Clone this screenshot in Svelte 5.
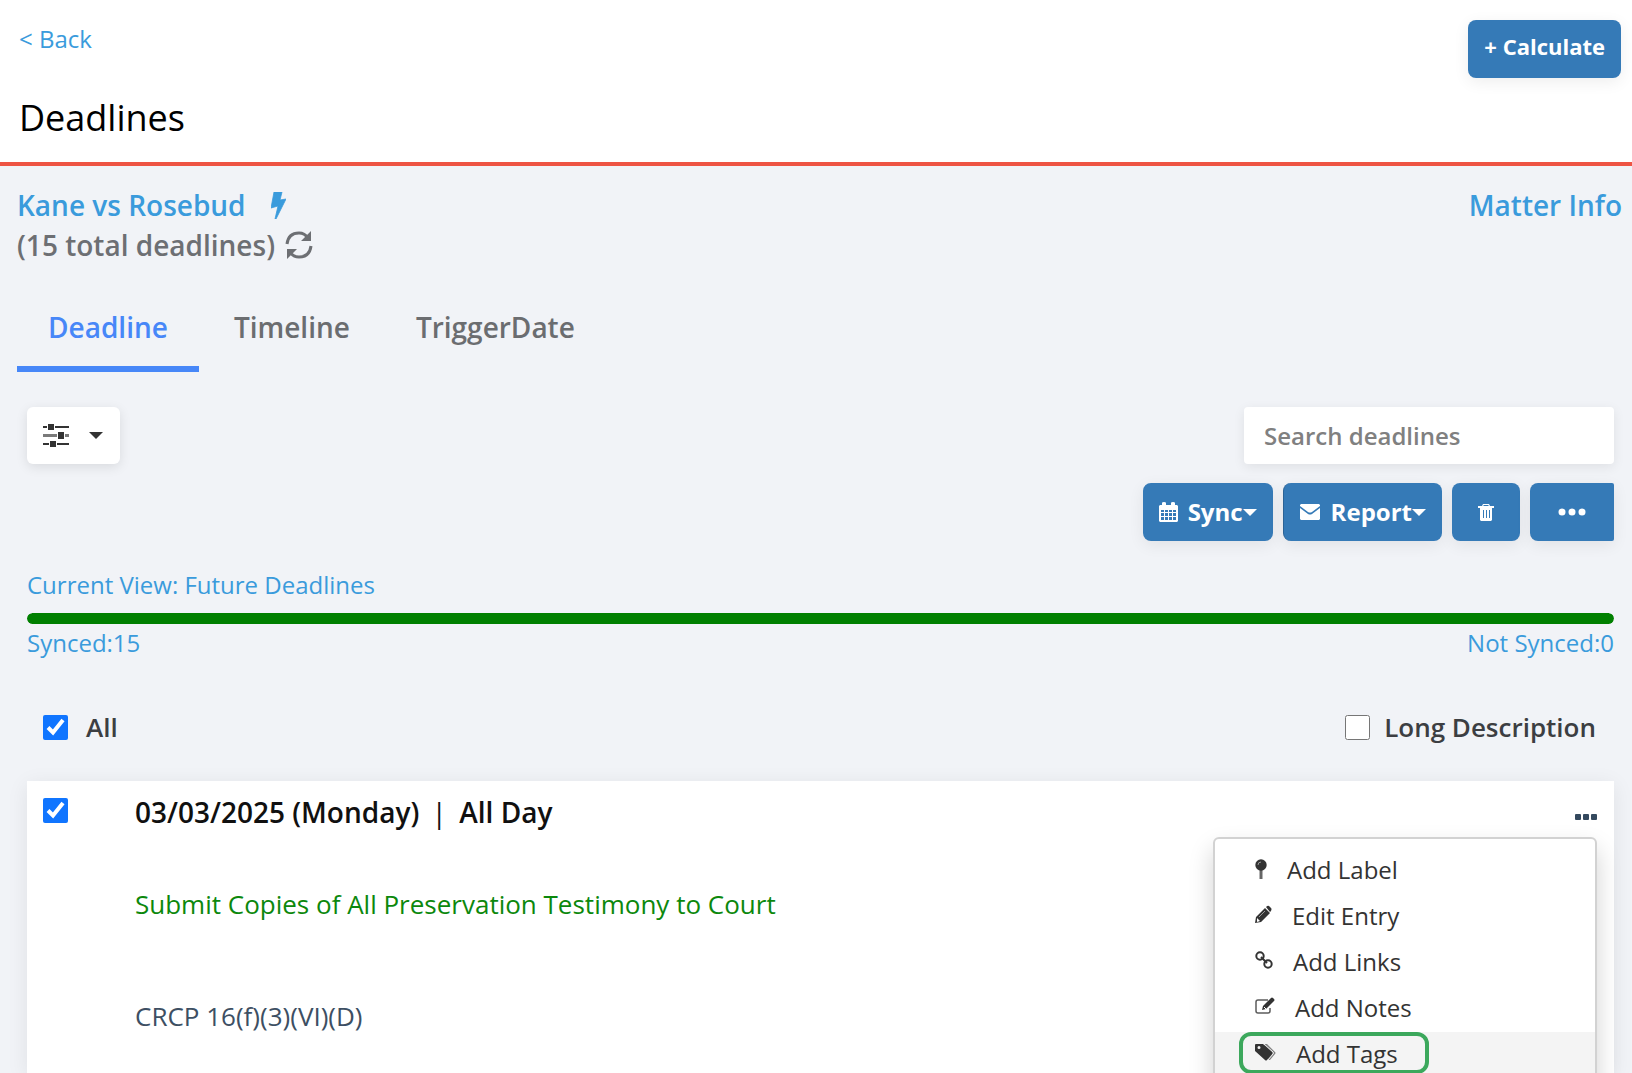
<script lang="ts">
  let allSelected = $state(true);
  let longDescription = $state(false);
  let entrySelected = $state(true);
  let search = $state("");
  let activeTab = $state("Deadline");

  const tabs = ["Deadline", "Timeline", "TriggerDate"];
  const synced = 15;
  const notSynced = 0;
  const syncedPercent = (synced / (synced + notSynced)) * 100;

  const actions = [
    { icon: "pin", label: "Add Label", width: 12 },
    { icon: "pencil", label: "Edit Entry", width: 17 },
    { icon: "link", label: "Add Links", width: 18 },
    { icon: "note", label: "Add Notes", width: 20 },
    { icon: "tags", label: "Add Tags", width: 21 },
  ];
</script>

{#snippet caret()}
  <svg class="caret" viewBox="0 0 14 7" aria-hidden="true"><path d="M0 0h14L7 7z" /></svg>
{/snippet}

<div class="page">
  <header class="header">
    <div>
      <a class="back" href="#back">&lt; Back</a>
      <h1>Deadlines</h1>
    </div>
    <button class="btn calculate">+ Calculate</button>
  </header>

  <main>
    <section class="matter">
      <div>
        <a class="matter-link" href="#matter">
          Kane vs Rosebud
          <svg class="bolt" viewBox="0 0 15 27" aria-hidden="true">
            <path d="M3 0h8L9 8l6-1L5 27H4l3-13-7 2z" stroke="currentColor" stroke-width="0.8" />
          </svg>
        </a>
        <div class="total">
          (15 total deadlines)
          <button class="refresh" aria-label="Refresh">
            <svg viewBox="0 0 28 28" aria-hidden="true">
              <path d="M2 13C3 5 8 2 14 2c4 0 7 2 9 5M26 15c-1 8-6 11-12 11-4 0-7-2-9-5" fill="none" stroke="currentColor" stroke-width="3" />
              <path d="M26 0v10H16zM2 28V18h10z" />
            </svg>
          </button>
        </div>
      </div>
      <a class="matter-link" href="#info">Matter Info</a>
    </section>

    <nav class="tabs">
      {#each tabs as tab}
        <button class="tab" class:active={activeTab === tab} onclick={() => (activeTab = tab)}>{tab}</button>
      {/each}
    </nav>

    <div class="content">
      <div class="toolbar">
        <button class="filter" aria-label="Filter deadlines">
          <svg class="sliders" viewBox="0 0 26 25" aria-hidden="true">
            <path d="M0 3h4v2H0zM12 3h14v2H12zM0 20h6v2H0zM14 20h12v2H14z" />
            <path d="M0 11h14v3H0zM22 11h4v3h-4z" opacity="0.65" />
            <path d="M5 1h6v6H5zM15 9h6v7h-6zM7 18h6v6H7z" />
          </svg>
          {@render caret()}
        </button>
        <input class="search" type="search" placeholder="Search deadlines" aria-label="Search deadlines" bind:value={search} />
      </div>

      <div class="buttons">
        <button class="btn sync">
          <svg class="calendar" viewBox="0 0 19 20" aria-hidden="true">
            <path fill-rule="evenodd" d="M1 3h2V1q0-1 2-1t2 1v2h5V1q0-1 2-1t2 1v2h2l1 1v15l-1 1H1l-1-1V4zM2 8v2h3V8zM6 8v2h3V8zM10 8v2h3V8zM14 8v2h3V8zM2 11v3h3v-3zM6 11v3h3v-3zM10 11v3h3v-3zM14 11v3h3v-3zM2 15v3h3v-3zM6 15v3h3v-3zM10 15v3h3v-3zM14 15v3h3v-3z" />
          </svg>
          <span>Sync</span>{@render caret()}
        </button>
        <button class="btn report">
          <svg class="envelope" viewBox="0 0 20 16" aria-hidden="true">
            <path d="M0 4l8 6q2 1 4 0l8-6v11l-1 1H1l-1-1zM1 0h18l1 1v1l-8 6q-2 1-4 0L0 2V1z" />
          </svg>
          <span>Report</span>{@render caret()}
        </button>
        <button class="btn trash" aria-label="Delete">
          <svg viewBox="0 0 16 17" aria-hidden="true">
            <path fill-rule="evenodd" d="M0 2h4l1-2h6l1 2h4v2h-2v12l-1 1H3l-1-1V4H0zM6 1L5 2h6l-1-1zM5 6v8h1V6zM8 6v8h1V6zM11 6v8h1V6z" />
          </svg>
        </button>
        <button class="btn more" aria-label="More actions">
          <svg viewBox="0 0 28 8" aria-hidden="true"><circle cx="4" cy="4" r="3.5" /><circle cx="14" cy="4" r="3.5" /><circle cx="24" cy="4" r="3.5" /></svg>
        </button>
      </div>

      <a class="view" href="#view">Current View: Future Deadlines</a>
      <div class="progress" role="progressbar" aria-label="Synced deadlines" aria-valuenow={syncedPercent}>
        <div class="progress-bar" style={`width: ${syncedPercent}%`}></div>
      </div>
      <div class="counts">
        <a href="#synced">Synced:{synced}</a>
        <a href="#not-synced">Not Synced:{notSynced}</a>
      </div>

      <div class="options">
        <label class="all"><input type="checkbox" bind:checked={allSelected} />All</label>
        <label><input type="checkbox" bind:checked={longDescription} />Long Description</label>
      </div>

      <article class="card">
        <input type="checkbox" aria-label="Select deadline" bind:checked={entrySelected} />
        <div class="entry">
          <h2>03/03/2025 (Monday) <span class="divider">|</span> All Day</h2>
          <p class="description">Submit Copies of All Preservation Testimony to Court</p>
          <p class="rule">CRCP 16(f)(3)(VI)(D)</p>
        </div>
        <div class="entry-menu">
          <button class="dots" aria-label="Entry actions">
            <svg viewBox="0 0 22 6" aria-hidden="true"><rect width="6" height="6" rx="1" /><rect x="8" width="6" height="6" rx="1" /><rect x="16" width="6" height="6" rx="1" /></svg>
          </button>
          <div class="menu">
            {#each actions as action}
              <button class="item" class:highlight={action.icon === "tags"}>
                <svg class="icon" viewBox={`0 0 ${action.width} 20`} style={`width: ${action.width}px`} aria-hidden="true">
                  {#if action.icon === "pin"}
                    <path d="M4.5 10h3v10h-3z" opacity="0.75" />
                    <circle cx="6" cy="6" r="5.7" />
                    <path d="M3 6q0-3 3-3" fill="none" stroke="#999999" />
                  {:else if action.icon === "pencil"}
                    <path d="M0 18l1-6L10 3l5 5-9 9zM11 2q2-2 3-1l2 2q1 1 0 3l-1 1z" />
                    <path d="M2 13l3 3-3 1z" fill="#ffffff" />
                    <path d="M4 12l6-6" fill="none" stroke="#999999" />
                  {:else if action.icon === "link"}
                    <g fill="none" stroke="currentColor" stroke-width="2">
                      <circle cx="5" cy="5" r="3.7" />
                      <circle cx="13" cy="13" r="3.7" />
                      <path d="M6 6l6 6" />
                    </g>
                  {:else if action.icon === "note"}
                    <path d="M13 3H3Q1 3 1 5v9q0 2 2 2h10q2 0 2-2v-3" fill="none" stroke="currentColor" stroke-width="1.5" opacity="0.8" />
                    <path d="M7 13l1-4 8-8q1-1 2 0l1 1q1 1 0 2l-8 8z" />
                    <path d="M9 10l2 2" stroke="#ffffff" />
                  {:else}
                    <path d="M9 1h3l8 8q1 1 0 2l-5 6h-2z" opacity="0.6" />
                    <path fill-rule="evenodd" d="M0 2q0-1 1-1h7l9 8q1 1 0 2l-5 6q-1 1-2 0L0 8zM4 3a1.5 1.5 0 1 0 0 3 1.5 1.5 0 0 0 0-3z" />
                    <path d="M9 1l9 8q1 1 0 2l-5 6" fill="none" stroke="#f4f4f4" />
                  {/if}
                </svg>
                {action.label}
              </button>
            {/each}
          </div>
        </div>
      </article>
    </div>
  </main>
</div>

<style>
  :global(body) {
    margin: 0;
  }

  .page {
    display: flex;
    flex-direction: column;
    height: 100vh;
    overflow: hidden;
    background: #f1f3f7;
    color: #3c3e42;
    font-family: "Open Sans", "Noto Sans", sans-serif;
    font-size: 24px;
    line-height: 32px;
  }

  .page * {
    box-sizing: border-box;
  }

  button,
  input {
    margin: 0;
    padding: 0;
    border: 0;
    background: none;
    color: inherit;
    font: inherit;
  }

  a {
    color: #3a9bdc;
    text-decoration: none;
  }

  svg {
    display: block;
    flex: none;
    fill: currentColor;
  }

  .header {
    display: flex;
    justify-content: space-between;
    align-items: flex-start;
    padding: 20px 11px 18px 19px;
    border-bottom: 4px solid #ee5443;
    background: #ffffff;
  }

  .back {
    display: block;
    padding-top: 3px;
  }

  h1 {
    margin: 37px 0 0;
    color: #000000;
    font-size: 36px;
    font-weight: 400;
    line-height: 52px;
  }

  .btn {
    display: flex;
    align-items: center;
    justify-content: center;
    height: 58px;
    border-radius: 8px;
    background: #357ab7;
    box-shadow: 0 4px 16px rgba(0, 0, 0, 0.07);
    color: #ffffff;
    font-weight: 700;
  }

  .calculate {
    padding: 0 16px 6px;
    font-size: 22px;
  }

  main {
    display: flex;
    flex: 1;
    flex-direction: column;
    padding: 19px 0 0 17px;
  }

  .matter {
    display: flex;
    justify-content: space-between;
    padding-right: 10px;
    font-size: 28px;
    font-weight: 600;
    line-height: 40px;
  }

  .matter-link,
  .total {
    display: flex;
    align-items: center;
    align-self: flex-start;
  }

  .total {
    gap: 10px;
    color: #6d6f73;
  }

  .bolt {
    width: 15px;
    height: 27px;
    margin-left: 25px;
  }

  .refresh svg {
    width: 28px;
    height: 28px;
  }

  .tabs {
    display: flex;
    gap: 4px;
    margin-top: 26px;
  }

  .tab {
    height: 81px;
    padding: 0 31px 3px;
    border-bottom: 6px solid transparent;
    color: #6b6d70;
    font-size: 28px;
    font-weight: 600;
  }

  .tab.active {
    border-color: #4787f8;
    color: #4787f8;
  }

  .content {
    display: flex;
    flex: 1;
    flex-direction: column;
    padding: 35px 18px 0 10px;
  }

  .toolbar,
  .counts,
  .options {
    display: flex;
    justify-content: space-between;
  }

  .filter {
    display: flex;
    align-items: center;
    gap: 20px;
    height: 57px;
    padding: 0 17px 0 16px;
    border-radius: 6px;
    background: #ffffff;
    box-shadow: 0 3px 12px rgba(0, 0, 0, 0.1);
    color: #333333;
  }

  .sliders {
    width: 26px;
    height: 25px;
  }

  .caret {
    width: 14px;
    height: 7px;
  }

  .search {
    width: 370px;
    height: 57px;
    padding: 0 20px;
    border-radius: 4px;
    background: #ffffff;
    box-shadow: 0 3px 12px rgba(0, 0, 0, 0.08);
    font-weight: 600;
  }

  .search::placeholder {
    color: #808080;
    opacity: 1;
  }

  .buttons {
    display: flex;
    justify-content: flex-end;
    gap: 10px;
    margin-top: 19px;
  }

  .sync,
  .report {
    padding: 0 16px;
  }

  .report {
    border-left: 1px solid #2b6396;
  }

  .calendar {
    width: 19px;
    height: 20px;
    margin-right: 10px;
  }

  .envelope {
    width: 20px;
    height: 16px;
    margin-right: 11px;
  }

  .trash {
    width: 68px;
  }

  .trash svg {
    width: 16px;
    height: 17px;
  }

  .more {
    width: 84px;
    border-radius: 8px 2px 2px 8px;
  }

  .more svg {
    width: 28px;
    height: 8px;
  }

  .view {
    align-self: flex-start;
    margin-top: 28px;
  }

  .progress {
    height: 11px;
    margin-top: 12px;
    overflow: hidden;
    border-radius: 6px;
    background: #dddddd;
  }

  .progress-bar {
    height: 100%;
    border-radius: 6px;
    background: #008000;
  }

  .counts {
    margin-top: 3px;
  }

  .options {
    margin-top: 52px;
    padding: 0 18px 0 16px;
    font-size: 26px;
    font-weight: 600;
  }

  label {
    display: flex;
    align-items: center;
    gap: 14px;
  }

  .all {
    gap: 18px;
  }

  input[type="checkbox"] {
    width: 25px;
    height: 25px;
    accent-color: #1075ff;
  }

  .card {
    display: flex;
    flex: 1;
    align-items: flex-start;
    margin-top: 38px;
    padding: 15px 17px 0 16px;
    background: #ffffff;
    box-shadow: 0 4px 20px rgba(0, 0, 0, 0.08);
  }

  .card > input {
    margin-top: 2px;
  }

  .entry {
    flex: 1;
    padding-left: 67px;
    color: #3d4f63;
    font-size: 26px;
  }

  h2 {
    margin: 0;
    color: #101010;
    font-size: 28px;
    font-weight: 600;
  }

  .divider {
    padding: 0 5px;
    font-weight: 400;
  }

  .description,
  .rule {
    margin: 60px 0 0;
  }

  .description {
    color: #0c880c;
  }

  .rule {
    margin-top: 80px;
  }

  .entry-menu {
    position: relative;
    padding-top: 18px;
    color: #34495e;
  }

  .dots {
    display: block;
  }

  .dots svg {
    width: 22px;
    height: 6px;
  }

  .menu {
    position: absolute;
    top: 41px;
    right: 0;
    width: 384px;
    padding: 9px 0;
    border: 2px solid #d2d2d2;
    border-radius: 6px;
    background: #ffffff;
    box-shadow: 0 12px 24px rgba(0, 0, 0, 0.18);
    color: #333333;
  }

  .item {
    position: relative;
    display: flex;
    gap: 20px;
    align-items: center;
    width: 100%;
    height: 46px;
    padding: 0 0 2px 40px;
    font-size: 24px;
  }

  .icon {
    height: 20px;
    margin-bottom: 2px;
  }

  .highlight {
    background: #f4f4f4;
  }

  .highlight::after {
    position: absolute;
    top: 0;
    left: 24px;
    box-sizing: border-box;
    width: 190px;
    height: 42px;
    border: 4px solid #3ca85c;
    border-radius: 12px;
    content: "";
  }
</style>
